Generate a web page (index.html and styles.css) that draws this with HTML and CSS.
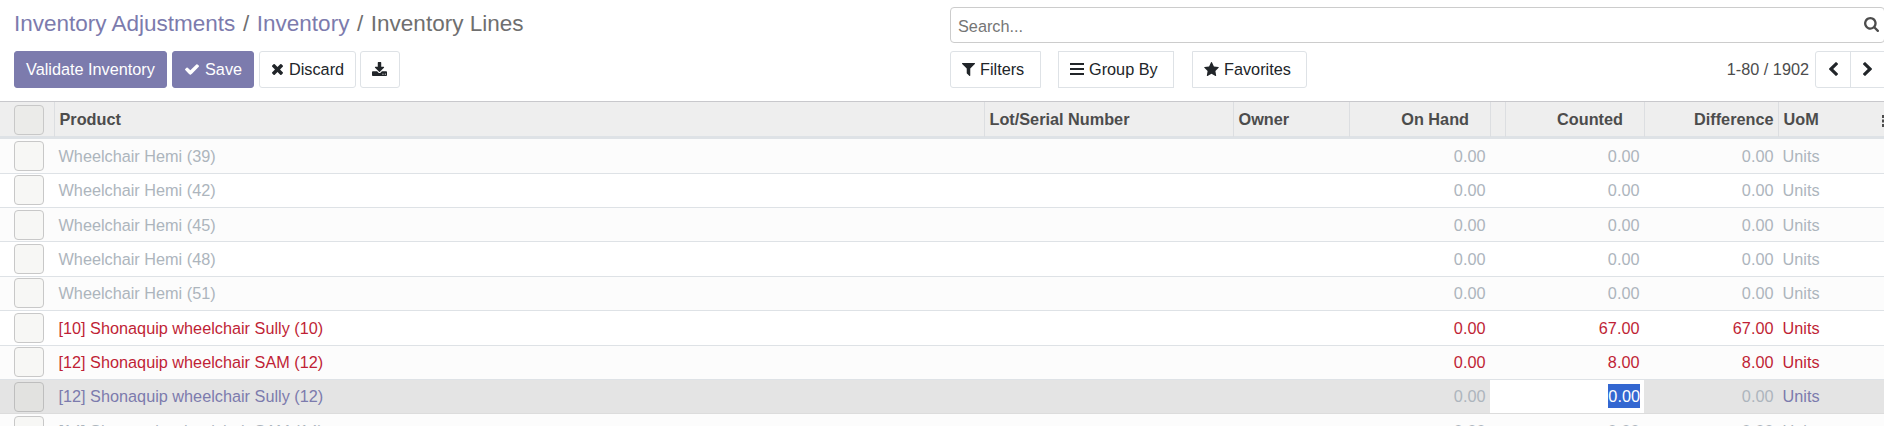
FILE: index.html
```html
<!DOCTYPE html>
<html lang="en">
<head>
<meta charset="utf-8">
<title>Inventory Lines</title>
<link rel="stylesheet" href="styles.css">
</head>
<body>
<header class="panel">
  <div class="panel-left">
    <nav class="breadcrumb"><a>Inventory Adjustments</a><span class="sep">/</span><a>Inventory</a><span class="sep">/</span><span>Inventory Lines</span></nav>
    <div class="buttons">
      <button class="btn primary validate">Validate Inventory</button>
      <button class="btn primary save"><svg class="i-check" viewBox="121 334 1550 1188"><path d="M1671 566q0 40-28 68l-724 724-136 136q-28 28-68 28t-68-28l-136-136-362-362q-28-28-28-68t28-68l136-136q28-28 68-28t68 28l294 295 656-657q28-28 68-28t68 28l136 136q28 28 28 68z"/></svg>Save</button>
      <button class="btn discard"><svg class="i-times" viewBox="302 366 1188 1188"><path d="M1490 1322q0 40-28 68l-136 136q-28 28-68 28t-68-28l-294-294-294 294q-28 28-68 28t-68-28l-136-136q-28-28-28-68t28-68l294-294-294-294q-28-28-28-68t28-68l136-136q28-28 68-28t68 28l294 294 294-294q28-28 68-28t68 28l136 136q28 28 28 68t-28 68l-294 294 294 294q28 28 28 68z"/></svg>Discard</button>
      <button class="btn export" aria-label="Export"><svg class="i-download" viewBox="64 0 1664 1536"><path d="M1344 1344q0-26-19-45t-45-19-45 19-19 45 19 45 45 19 45-19 19-45zm256 0q0-26-19-45t-45-19-45 19-19 45 19 45 45 19 45-19 19-45zm128-224v320q0 40-28 68t-68 28h-1472q-40 0-68-28t-28-68v-320q0-40 28-68t68-28h465l135 136q58 56 136 56t136-56l136-136h464q40 0 68 28t28 68zm-325-569q17 41-14 70l-448 448q-18 19-45 19t-45-19l-448-448q-31-29-14-70 17-39 59-39h256v-448q0-26 19-45t45-19h256q26 0 45 19t19 45v448h256q42 0 59 39z"/></svg></button>
    </div>
  </div>
  <div class="panel-right">
    <div class="search"><span>Search...</span><svg class="i-search" viewBox="64 128 1664 1664"><path d="M1216 832q0-185-131.500-316.500t-316.500-131.500-316.500 131.500-131.500 316.500 131.500 316.500 316.500 131.500 316.500-131.500 131.500-316.500zm512 832q0 52-38 90t-90 38q-54 0-90-38l-343-342q-179 124-399 124-143 0-273.500-55.500t-225-150-150-225-55.500-273.500 55.500-273.500 150-225 225-150 273.500-55.500 273.500 55.500 225 150 150 225 55.500 273.500q0 220-124 399l343 343q37 37 37 90z"/></svg></div>
    <div class="tools">
      <button class="btn filters"><svg class="i-filter" viewBox="192 256 1408 1408"><path d="M1595 295q17 41-14 70l-493 493v742q0 42-39 59-13 5-25 5-27 0-45-19l-256-256q-19-19-19-45v-486l-493-493q-31-29-14-70 17-39 59-39h1280q42 0 59 39z"/></svg>Filters</button>
      <button class="btn group"><svg class="i-bars" viewBox="0 0 14 12"><path d="M0 0h14v2H0zM0 5h14v2H0zM0 10h14v2H0z"/></svg>Group By</button>
      <button class="btn favorites"><svg class="i-star" viewBox="64 32 1664 1587"><path d="M1728 647q0 22-26 48l-363 354 86 500q1 7 1 20 0 21-10.500 35.500t-30.500 14.500q-19 0-40-12l-449-236-449 236q-22 12-40 12-21 0-31.500-14.500t-10.500-35.500q0-6 2-20l86-500-364-354q-25-27-25-48 0-37 56-46l502-73 225-455q19-41 49-41t49 41l225 455 502 73q56 9 56 46z"/></svg>Favorites</button>
      <span class="count">1-80 / 1902</span>
      <div class="pager">
        <button class="btn prev" aria-label="Previous"><svg class="i-chev" viewBox="410 26 1036 1612"><path d="M1427 301l-531 531 531 531q19 19 19 45t-19 45l-166 166q-19 19-45 19t-45-19l-742-742q-19-19-19-45t19-45l742-742q19-19 45-19t45 19l166 166q19 19 19 45t-19 45z"/></svg></button>
        <button class="btn next" aria-label="Next"><svg class="i-chev" viewBox="346 26 1036 1612"><path d="M1363 877l-742 742q-19 19-45 19t-45-19l-166-166q-19-19-19-45t19-45l531-531-531-531q-19-19-19-45t19-45l166-166q19-19 45-19t45 19l742 742q19 19 19 45t-19 45z"/></svg></button>
      </div>
    </div>
  </div>
</header>
<main class="list">
  <div class="row head"><div class="pick"><i class="box"></i></div><div>Product</div><div>Lot/Serial Number</div><div>Owner</div><div class="num sortable">On Hand</div><div></div><div class="num sortable">Counted</div><div class="num">Difference</div><div class="unit">UoM<svg class="i-kebab" viewBox="0 0 3 12"><path d="M0 0h3v3H0zM0 4.500h3v3H0zM0 9h3v3H0z"/></svg></div></div>
  <div class="row muted"><div class="pick"><i class="box"></i></div><div class="product">Wheelchair Hemi (39)</div><div class="num onhand">0.00</div><div class="num counted">0.00</div><div class="num">0.00</div><div class="unit">Units</div></div>
  <div class="row muted"><div class="pick"><i class="box"></i></div><div class="product">Wheelchair Hemi (42)</div><div class="num onhand">0.00</div><div class="num counted">0.00</div><div class="num">0.00</div><div class="unit">Units</div></div>
  <div class="row muted"><div class="pick"><i class="box"></i></div><div class="product">Wheelchair Hemi (45)</div><div class="num onhand">0.00</div><div class="num counted">0.00</div><div class="num">0.00</div><div class="unit">Units</div></div>
  <div class="row muted"><div class="pick"><i class="box"></i></div><div class="product">Wheelchair Hemi (48)</div><div class="num onhand">0.00</div><div class="num counted">0.00</div><div class="num">0.00</div><div class="unit">Units</div></div>
  <div class="row muted"><div class="pick"><i class="box"></i></div><div class="product">Wheelchair Hemi (51)</div><div class="num onhand">0.00</div><div class="num counted">0.00</div><div class="num">0.00</div><div class="unit">Units</div></div>
  <div class="row danger"><div class="pick"><i class="box"></i></div><div class="product">[10] Shonaquip wheelchair Sully (10)</div><div class="num onhand">0.00</div><div class="num counted">67.00</div><div class="num">67.00</div><div class="unit">Units</div></div>
  <div class="row danger"><div class="pick"><i class="box"></i></div><div class="product">[12] Shonaquip wheelchair SAM (12)</div><div class="num onhand">0.00</div><div class="num counted">8.00</div><div class="num">8.00</div><div class="unit">Units</div></div>
  <div class="row muted selected"><div class="pick"><i class="box"></i></div><div class="product link">[12] Shonaquip wheelchair Sully (12)</div><div class="num onhand">0.00</div><div class="num counted editing"><mark>0.00</mark></div><div class="num">0.00</div><div class="unit link">Units</div></div>
  <div class="row muted"><div class="pick"><i class="box"></i></div><div class="product">[14] Shonaquip wheelchair SAM (14)</div><div class="num onhand">0.00</div><div class="num counted">0.00</div><div class="num">0.00</div><div class="unit">Units</div></div>
</main>
</body>
</html>
```
FILE: styles.css
```css
* { box-sizing: border-box; }
html, body { height: 426px; overflow: hidden; }
body {
  margin: 0;
  background: #fff;
  color: #4c4c4c;
  font: 16.25px/24px "Liberation Sans", Arial, sans-serif;
}
svg { display: block; flex: none; fill: currentColor; }

.panel { display: grid; grid-template-columns: 950px 940px; height: 101px; }
.panel-left { padding: 7px 0 0 14px; }
.breadcrumb { display: flex; height: 34px; font-size: 22.5px; line-height: 33px; color: #6f6f6f; white-space: nowrap; }
.breadcrumb a { color: #7c7bad; }
.sep { padding: 0 7.6px; }
.buttons { display: flex; margin-top: 10px; }
.btn {
  display: flex;
  align-items: center;
  height: 37px;
  padding: 0 0 1px 11px;
  border: 1px solid #dee2e6;
  border-radius: 3px;
  background: #fff;
  color: #212529;
  font: inherit;
  white-space: nowrap;
}
.primary { background: #7c7bad; border-color: #7c7bad; color: #fff; }
.validate { width: 153px; margin-right: 5px; }
.save { width: 82px; margin-right: 5px; padding-left: 12px; }
.discard { width: 97px; margin-right: 4px; padding-left: 12px; }
.export { width: 40px; }
.i-check { width: 14px; height: 11px; margin-right: 6px; }
.i-times { width: 11px; height: 11px; margin: 1px 6px 0 0; }
.i-download { width: 15px; height: 14px; margin-bottom: 1px; }

.panel-right { padding-top: 7px; }
.search {
  display: flex;
  justify-content: space-between;
  width: 935px;
  height: 36px;
  padding: 6px 5px 0 7px;
  border: 1px solid #ccc;
  border-radius: 4px;
  color: #757575;
}
.i-search { width: 15px; height: 15px; margin-top: 3px; color: #4c4c4c; }
.tools { display: flex; align-items: center; margin-top: 8px; }
.filters { width: 91px; margin-right: 17px; border-radius: 3px 0 0 3px; }
.group { width: 116px; margin-right: 18px; border-radius: 0; }
.favorites { width: 115px; border-radius: 0 3px 3px 0; }
.i-filter { width: 13px; height: 13px; margin: 1px 5px 0 0; }
.i-bars { width: 14px; height: 12px; margin-right: 5px; }
.i-star { width: 15px; height: 14px; margin-right: 5px; margin-bottom: 1px; }
.count { width: 508px; height: 25px; padding-right: 6px; text-align: right; }
.pager { display: flex; }
.prev { width: 36px; padding-left: 13px; border-radius: 3px 0 0 3px; }
.next { width: 36px; margin-left: -1px; padding-left: 12px; border-radius: 0; }
.i-chev { width: 9px; height: 14px; }

.list { border-top: 1px solid #c8c8cc; }
.row {
  display: grid;
  grid-template-columns: 55px 930px 249px 116px 141px 15px 139px 134px 1fr;
  height: 34.375px;
  border-bottom: 1px solid #dee2e6;
  line-height: 32.8px;
  white-space: nowrap;
}
.row > div { padding: 0.5px 5.5px 0 3.5px; }
.row:nth-child(even) { background: #fcfcfc; }
.pick.pick { padding: 1.65px 0 0 14px; }
.box {
  display: block;
  width: 30px;
  height: 30px;
  border: 1px solid #c8c8c8;
  border-radius: 4px;
  background: #f7f7f5;
}
.product { grid-column: 2 / 5; }
.onhand { grid-column: 5; }
.counted { grid-column: 6 / 8; }
.num { text-align: right; }

.row:not(.head) { line-height: 33.7px; grid-template-rows: 33.375px; }

.row.head {
  height: 37.3px;
  border-bottom: 3px solid #dee2e6;
  background: #eee;
  font-weight: 700;
  line-height: 35px;
}
.head > div:not(:last-child) { border-right: 1px solid #dcdee1; }
.row.head > div { padding: 0 4.5px; }
.row.head .pick { padding: 3px 0 0 14px; }
.head .box { background: #ebebe9; }
.row.head .sortable { padding-right: 21px; }
.row.head .unit { display: flex; justify-content: space-between; align-items: center; padding-right: 0; }
.i-kebab { width: 3px; height: 12px; margin: 2px -1px 0 0; }

.muted { color: #adb5bd; }
.danger { color: #c01f36; }
.row.selected { background: #e4e4e4; border-color: #dcdcdc; }
.selected .box { background: #e2e2e0; border-color: #bebebe; }
.link { color: #7c7bad; }
.row .editing { margin: 0 1px 0 -1px; padding-right: 4px; background: #fff; line-height: 32px; }
mark { display: inline-block; height: 24px; line-height: 24px; background: #3367d1; color: #fff; }
```
